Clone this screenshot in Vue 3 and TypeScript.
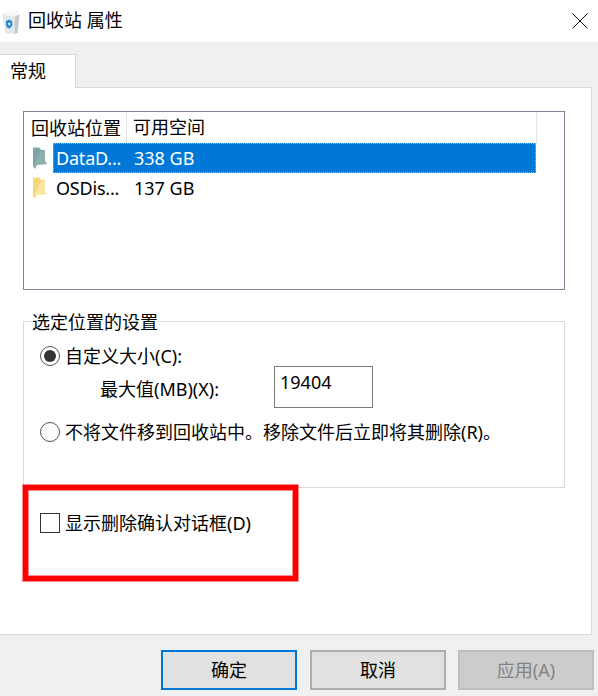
<script setup lang="ts">
interface Drive {
  name: string;
  space: string;
  selected: boolean;
}

const drives: Drive[] = [
  { name: 'DataD...', space: '338 GB', selected: true },
  { name: 'OSDis...', space: '137 GB', selected: false },
];
</script>

<template>
  <div class="window">
    <header class="titlebar">
      <svg class="bin-icon" width="20" height="30" viewBox="0 0 20 30">
        <path d="M1 9 L17 6.5 L18.5 9 L16.5 28 Q9 30 4.5 28 Z" fill="#e4e7e9" />
        <path d="M1 9 L4 7 L9 5 L13 7.5 L17 6.5 L18.5 9.5 Q10 13 1 9 Z" fill="#f6f7f8" />
        <path d="M14 12 L18.5 9.5 L16.5 28 L13.5 28.8 Z" fill="#c3c8cc" />
        <path d="M5 16 L8 14.5 L11 16 L11.5 20 L9 23.5 L6.5 23 L4.8 20 Z" fill="#2b8bd0" />
        <path d="M7 18 L9.2 17.8 L9.4 20 L7.4 20.3 Z" fill="#e4f1fa" />
      </svg>
      <span class="title">回收站 属性</span>
      <svg class="close-icon" width="16" height="16" viewBox="0 0 16 16">
        <path d="M0.5 0.5 L15.5 15.5 M15.5 0.5 L0.5 15.5" stroke="#111" stroke-width="1" fill="none" />
      </svg>
    </header>

    <main class="content">
      <div class="tab">常规</div>
      <section class="panel">
        <div class="listbox">
          <div class="list-head">
            <span class="col-name">回收站位置</span>
            <span class="col-space">可用空间</span>
          </div>
          <div v-for="drive in drives" :key="drive.name" class="list-row">
            <svg class="folder-icon" width="16" height="22" viewBox="0 0 16 22">
              <path
                d="M1 0.5 L7 0.5 L9 3 L13 3 L13 14 L15 17 L3 17.5 L3 22 L1 19 Z"
                :fill="drive.selected ? '#7fa6ac' : '#f6d777'"
              />
              <path
                d="M9 4 L13 3 L13 14 L15 17 L5 18 L3 22 L3 17 Z"
                :fill="drive.selected ? '#8fb0ad' : '#fbe6a2'"
              />
            </svg>
            <div class="row-cells" :class="{ selected: drive.selected }">
              <span class="cell-name">{{ drive.name }}</span>
              <span class="cell-space">{{ drive.space }}</span>
            </div>
          </div>
        </div>

        <fieldset class="group">
          <legend>选定位置的设置</legend>
          <label class="option custom">
            <span class="radio checked"></span>
            <span>自定义大小(C):</span>
          </label>
          <div class="max-size">
            <span>最大值(MB)(X):</span>
            <div class="size-input">19404</div>
          </div>
          <label class="option discard">
            <span class="radio"></span>
            <span>不将文件移到回收站中。移除文件后立即将其删除(R)。</span>
          </label>
        </fieldset>

        <label class="option confirm">
          <span class="checkbox"></span>
          <span>显示删除确认对话框(D)</span>
        </label>

        <div class="annotation"></div>
      </section>

      <footer class="actions">
        <button type="button" class="btn default">确定</button>
        <button type="button" class="btn cancel">取消</button>
        <button type="button" class="btn apply" disabled>应用(A)</button>
      </footer>
    </main>
  </div>
</template>

<style>
html,
body {
  margin: 0;
  background: #f0f0f0;
}
</style>

<style scoped>
.window {
  width: 598px;
  height: 696px;
  display: flex;
  flex-direction: column;
  overflow: hidden;
  font-family: "Noto Sans", "Noto Sans CJK SC", sans-serif;
  font-size: 18px;
  line-height: 24px;
  color: #000;
}

.titlebar {
  height: 42px;
  flex: none;
  display: flex;
  align-items: center;
  background: #fff;
  padding: 0 10px 0 1px;
}

.bin-icon {
  flex: none;
  margin-top: -2px;
}

.title {
  margin-left: 7px;
  margin-top: -2px;
}

.close-icon {
  margin-left: auto;
  margin-top: -1px;
}

.content {
  flex: 1;
  background: #f0f0f0;
  padding-top: 12px;
}

.tab {
  position: relative;
  z-index: 1;
  box-sizing: border-box;
  width: 76px;
  height: 34px;
  margin-bottom: -1px;
  padding: 4px 0 0 10px;
  background: #fff;
  border: 1px solid #d9d9d9;
  border-width: 1px 1px 0 0;
}

.panel {
  position: relative;
  box-sizing: border-box;
  width: 592px;
  height: 548px;
  padding: 23px 26px 0 23px;
  background: #fff;
  border: 1px solid #d9d9d9;
  border-left: none;
}

.listbox {
  box-sizing: border-box;
  height: 179px;
  border: 1px solid #82819a;
  background: #fff;
}

.list-head {
  display: flex;
  width: 512px;
  height: 31px;
  align-items: center;
  border-right: 1px solid #e5e5e5;
}

.col-name {
  box-sizing: border-box;
  width: 103px;
  padding-left: 7px;
  border-right: 1px solid #e5e5e5;
  height: 30px;
  line-height: 31px;
}

.col-space {
  padding-left: 6px;
  line-height: 31px;
}

.list-row {
  display: flex;
  height: 30px;
  align-items: center;
}

.folder-icon {
  flex: none;
  margin-left: 8px;
}

.row-cells {
  box-sizing: border-box;
  display: flex;
  width: 483px;
  height: 30px;
  margin-left: 5px;
  align-items: center;
  border: 1px solid transparent;
}

.row-cells.selected {
  background: #0078d7;
  color: #fff;
  border: 1px dotted #f4a13e;
}

.cell-name {
  width: 80px;
  padding-left: 2px;
  box-sizing: border-box;
  white-space: nowrap;
  letter-spacing: -0.2px;
}

.group {
  box-sizing: border-box;
  height: 167px;
  margin: 31px 0 0;
  padding: 0 0 0 16px;
  border: 1px solid #d9d9d9;
  min-width: 0;
  position: relative;
}

legend {
  position: absolute;
  top: -11px;
  left: 8px;
  padding: 0;
  background: #fff;
  line-height: 22px;
}

.option {
  display: flex;
  align-items: center;
  gap: 5px;
}

.custom {
  margin-top: 22px;
}

.radio {
  box-sizing: border-box;
  flex: none;
  width: 20px;
  height: 20px;
  display: flex;
  align-items: center;
  justify-content: center;
  border: 1px solid #555;
  border-radius: 50%;
  background: #fff;
}

.radio.checked::after {
  content: "";
  width: 12px;
  height: 12px;
  border-radius: 50%;
  background: #333;
}

.max-size {
  display: flex;
  align-items: flex-start;
  margin: -2px 0 0 60px;
}

.max-size > span {
  width: 174px;
  margin-top: 11px;
}

.size-input {
  box-sizing: border-box;
  width: 99px;
  height: 42px;
  padding: 3px 0 0 5px;
  border: 1px solid #7a7a7a;
  background: #fff;
}

.discard {
  margin-top: 12px;
}

.confirm {
  margin: 23px 0 0 17px;
}

.checkbox {
  box-sizing: border-box;
  flex: none;
  width: 20px;
  height: 20px;
  border: 1px solid #333;
  background: #fff;
}

/* red highlight drawn over the dialog */
.annotation {
  position: absolute;
  left: 23px;
  top: 397px;
  width: 275px;
  height: 96px;
  box-sizing: border-box;
  border: 5px solid #ff0000;
  box-shadow: 0 0 0 1px rgba(255, 0, 0, 0.45), inset 0 0 0 1px rgba(255, 0, 0, 0.45);
  pointer-events: none;
}

.actions {
  display: flex;
  justify-content: flex-end;
  gap: 12px;
  padding: 15px 4px 0 0;
}

.btn {
  width: 136px;
  height: 40px;
  padding: 0;
  font: inherit;
  color: #000;
  background: #e1e1e1;
  border: 2px solid #adadad;
}

.btn.default {
  border-color: #0078d7;
  margin-right: 1px;
}

.btn.apply {
  color: #838383;
  background: #ccc;
  border-color: #bfbfbf;
}
</style>
